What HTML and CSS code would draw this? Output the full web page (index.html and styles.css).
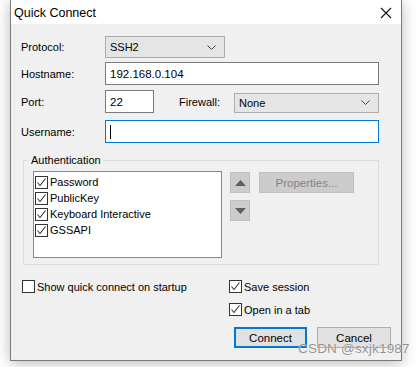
FILE: index.html
```html
<!DOCTYPE html>
<html>
<head>
    <title>Quick Connect</title>
    <link rel="stylesheet" href="styles.css">
</head>
<body>
    <div class="dialog">
        <div class="titlebar">
            <span class="title">Quick Connect</span>
            <svg class="close" width="12" height="12" viewBox="0 0 12 12">
                <path d="M1 1 L11 11 M11 1 L1 11" stroke="#111" stroke-width="1.1" fill="none"/>
            </svg>
        </div>

        <div class="content">
            <div class="row row-protocol">
                <span class="label">Protocol:</span>
                <div class="select protocol-select">
                    <span>SSH2</span>
                    <svg class="chev" width="9" height="5" viewBox="0 0 9 5"><path d="M0.5 0.5 L4.5 4.5 L8.5 0.5" stroke="#444" fill="none"/></svg>
                </div>
            </div>

            <div class="row row-host">
                <span class="label">Hostname:</span>
                <div class="textbox host-box">192.168.0.104</div>
            </div>

            <div class="row row-port">
                <span class="label">Port:</span>
                <div class="textbox port-box">22</div>
                <span class="label fw-label">Firewall:</span>
                <div class="select fw-select">
                    <span>None</span>
                    <svg class="chev" width="9" height="5" viewBox="0 0 9 5"><path d="M0.5 0.5 L4.5 4.5 L8.5 0.5" stroke="#444" fill="none"/></svg>
                </div>
            </div>

            <div class="row row-user">
                <span class="label">Username:</span>
                <div class="textbox user-box focused"><span class="caret"></span></div>
            </div>

            <fieldset class="auth">
                <legend>Authentication</legend>
                <div class="auth-inner">
                    <div class="listbox">
                        <div class="item"><span class="check on"><svg width="11" height="11" viewBox="0 0 11 11"><path d="M1.5 5.5 L4 8.5 L9.5 1.5" stroke="#333" stroke-width="1.1" fill="none"/></svg></span>Password</div>
                        <div class="item"><span class="check on"><svg width="11" height="11" viewBox="0 0 11 11"><path d="M1.5 5.5 L4 8.5 L9.5 1.5" stroke="#333" stroke-width="1.1" fill="none"/></svg></span>PublicKey</div>
                        <div class="item"><span class="check on"><svg width="11" height="11" viewBox="0 0 11 11"><path d="M1.5 5.5 L4 8.5 L9.5 1.5" stroke="#333" stroke-width="1.1" fill="none"/></svg></span>Keyboard Interactive</div>
                        <div class="item"><span class="check on"><svg width="11" height="11" viewBox="0 0 11 11"><path d="M1.5 5.5 L4 8.5 L9.5 1.5" stroke="#333" stroke-width="1.1" fill="none"/></svg></span>GSSAPI</div>
                    </div>
                    <div class="arrows">
                        <div class="arrow-btn"><svg width="11" height="6" viewBox="0 0 11 6"><path d="M5.5 0 L11 6 L0 6 Z" fill="#5f5f5f"/></svg></div>
                        <div class="arrow-btn"><svg width="11" height="6" viewBox="0 0 11 6"><path d="M0 0 L11 0 L5.5 6 Z" fill="#5f5f5f"/></svg></div>
                    </div>
                    <div class="btn disabled props">Properties...</div>
                </div>
            </fieldset>

            <div class="options">
                <div class="opt-left">
                    <div class="opt"><span class="check"></span>Show quick connect on startup</div>
                </div>
                <div class="opt-right">
                    <div class="opt"><span class="check on"><svg width="11" height="11" viewBox="0 0 11 11"><path d="M1.5 5.5 L4 8.5 L9.5 1.5" stroke="#333" stroke-width="1.1" fill="none"/></svg></span>Save session</div>
                    <div class="opt"><span class="check on"><svg width="11" height="11" viewBox="0 0 11 11"><path d="M1.5 5.5 L4 8.5 L9.5 1.5" stroke="#333" stroke-width="1.1" fill="none"/></svg></span>Open in a tab</div>
                </div>
            </div>

            <div class="buttons">
                <div class="btn default">Connect</div>
                <div class="btn">Cancel</div>
            </div>
        </div>
    </div>
    <div class="watermark">CSDN @sxjk1987</div>
</body>
</html>
```

FILE: styles.css
```css
body {
    margin: 0;
    background: #fff;
    font-family: "Liberation Sans", Arial, sans-serif;
    font-size: 11px;
    color: #000;
    width: 419px;
    height: 367px;
    overflow: hidden;
    position: relative;
}

.dialog {
    margin-left: 10px;
    width: 390px;
    height: 360px;
    border: 1px solid #7a7a7a;
    border-top: none;
    background: #f0f0f0;
    box-shadow: 0 2px 14px rgba(0, 0, 0, 0.28);
}

.titlebar {
    height: 24px;
    background: #fff;
    display: flex;
    align-items: center;
    justify-content: space-between;
    padding: 0 9px 0 3px;
}

.title {
    font-size: 12.5px;
    padding-top: 1px;
}

.close {
    margin-top: 1px;
}

.content {
    padding: 12px 10px 0 10px;
}

.row {
    display: flex;
    align-items: center;
    margin-right: 12px;
}

.label {
    width: 84px;
    flex: none;
}

.select {
    height: 20px;
    background: #e5e5e5;
    border: 1px solid #adadad;
    display: flex;
    align-items: center;
    justify-content: space-between;
    padding: 0 8px 0 4px;
}

.textbox {
    height: 21px;
    background: #fff;
    border: 1px solid #7a7a7a;
    padding: 0 4px;
    display: flex;
    align-items: center;
    font-size: 11.5px;
}

.protocol-select {
    width: 106px;
}

.row-host {
    margin-top: 4px;
}

.host-box {
    flex: 1;
}

.row-port {
    margin-top: 5px;
}

.port-box {
    width: 39px;
}

.fw-label {
    width: 55px;
    margin-left: 25px;
}

.fw-select {
    flex: 1;
    height: 18px;
    margin-top: 2px;
}

.row-user {
    margin-top: 7px;
}

.user-box {
    flex: 1;
}

.focused {
    border-color: #0078d7;
}

.caret {
    width: 1px;
    height: 14px;
    background: #000;
}

/* authentication group */
.auth {
    margin: 11px 12px 0 2px;
    padding: 0 0 6px 5px;
    border: 1px solid #dcdcdc;
    min-width: 0;
}

.auth legend {
    padding: 0 2px;
    line-height: 13px;
}

.auth-inner {
    display: flex;
    align-items: flex-start;
    padding: 4px 0 0 4px;
}

.listbox {
    width: 187px;
    height: 83px;
    background: #fff;
    border: 1px solid #828790;
    padding-top: 2px;
}

.item {
    height: 16px;
    display: flex;
    align-items: center;
    padding-left: 1px;
}

.check {
    width: 11px;
    height: 11px;
    border: 1px solid #333;
    background: #fff;
    margin-right: 2px;
    display: inline-flex;
    flex: none;
}

.arrows {
    margin-left: 8px;
    margin-top: 1px;
    display: flex;
    flex-direction: column;
    gap: 7px;
}

.arrow-btn {
    width: 18px;
    height: 19px;
    background: #cccccc;
    border: 1px solid #bfbfbf;
    display: flex;
    align-items: center;
    justify-content: center;
}

.btn {
    height: 19px;
    background: #e1e1e1;
    border: 1px solid #adadad;
    display: flex;
    align-items: center;
    justify-content: center;
    font-size: 11.5px;
}

.props {
    width: 93px;
    margin-left: 9px;
    margin-top: 1px;
}

.disabled {
    background: #cccccc;
    border-color: #bfbfbf;
    color: #838383;
}

/* options */
.options {
    display: flex;
    margin-top: 14px;
}

.opt-left {
    width: 207px;
    padding-left: 1px;
}

.opt {
    display: flex;
    align-items: center;
    height: 15px;
    margin-bottom: 8px;
}

.buttons {
    display: flex;
    justify-content: flex-end;
    gap: 10px;
    margin-top: 2px;
}

.buttons .btn {
    width: 72px;
}

.btn.default {
    border: 2px solid #0078d7;
    width: 69px;
    height: 17px;
}

.watermark {
    position: absolute;
    left: 298px;
    top: 341px;
    font-size: 13.5px;
    color: rgba(110, 110, 110, 0.75);
    text-shadow: 0 0 1px #fff;
    letter-spacing: 0.2px;
}
```
